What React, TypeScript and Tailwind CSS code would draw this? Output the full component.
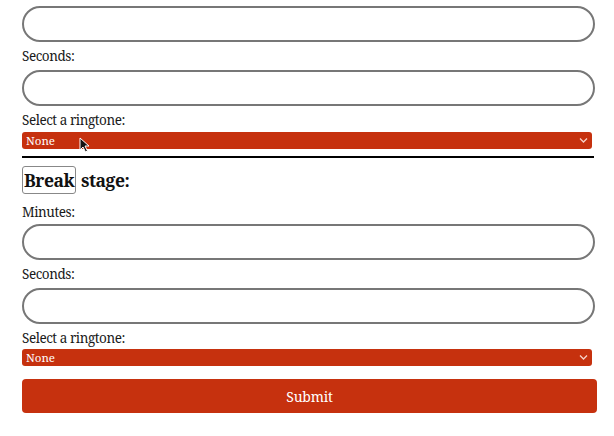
import React, { useState } from "react";

const font = "font-['Noto_Serif','DejaVu_Serif',serif]";

const TextField: React.FC = () => (
    <input
        type="text"
        className="block w-[573px] h-9 rounded-full border-2 border-[#777] bg-white px-4 outline-none"
    />
);

const Ringtone: React.FC = () => (
    <div className="relative w-[570px]">
        <select className="block w-full h-[17px] appearance-none rounded-[3px] bg-[#c6310e] pl-1 text-[11.5px] leading-[17px] text-white outline-none">
            <option>None</option>
        </select>
        <svg
            className="pointer-events-none absolute right-[4px] top-[5px]"
            width="9"
            height="7"
            viewBox="0 0 9 7"
            fill="none"
            stroke="#f6d2c8"
            strokeWidth="1.3"
        >
            <path d="M1 1.5 L4.5 5 L8 1.5" />
        </svg>
    </div>
);

const labelText = "block text-[13.5px] leading-[19px] tracking-[-0.45px] text-[#1a1a1a]";

const App: React.FC = () => {
    const [done, setDone] = useState(false);

    return (
        <div className={`relative min-h-[436px] w-[614px] bg-white px-[22px] pt-[6px] text-[#111] ${font}`}>
            <form
                onSubmit={(e) => {
                    e.preventDefault();
                    setDone(!done);
                }}
            >
                <TextField />
                <label className={`mt-[5px] mb-[4px] ${labelText}`}>Seconds:</label>
                <TextField />
                <label className={`mt-[5px] mb-[2px] ${labelText}`}>Select a ringtone:</label>
                <Ringtone />

                <hr className="mt-[7px] w-[572px] border-t-2 border-black" />

                <h3 className="mt-[8px] flex items-center text-[17.5px] font-bold leading-[26px] tracking-[-0.5px]">
                    <span className="rounded-[3px] border border-[#888] px-[1px]">Break</span>
                    <span className="ml-[5px]">stage:</span>
                </h3>

                <label className={`mt-[9px] mb-[2px] ${labelText}`}>Minutes:</label>
                <TextField />
                <label className={`mt-[5px] mb-[4px] ${labelText}`}>Seconds:</label>
                <TextField />
                <label className={`mt-[5px] mb-[1px] ${labelText}`}>Select a ringtone:</label>
                <Ringtone />

                <button
                    type="submit"
                    className="mt-[13px] block h-[34px] w-[575px] rounded-[4px] bg-[#c6310e] text-[14px] tracking-[-0.2px] text-white"
                >
                    Submit
                </button>
            </form>

            <svg className="absolute left-[79px] top-[137px]" width="11" height="16" viewBox="0 0 11 16">
                <path d="M1 1 L1 13 L4 10 L6.5 15 L8.5 14 L6 9 L10 9 Z" fill="#111" stroke="#fff" strokeWidth="1" />
            </svg>
        </div>
    );
};

export default App;
